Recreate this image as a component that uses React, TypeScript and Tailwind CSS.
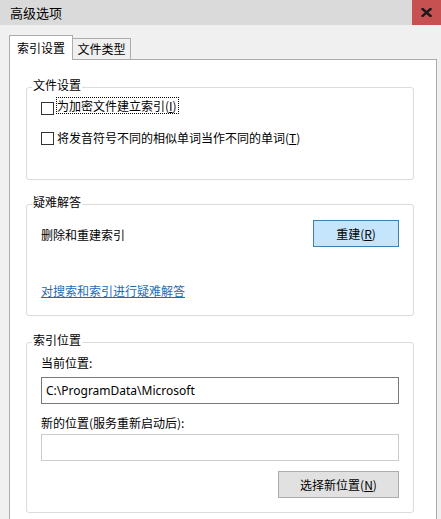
import React from "react";

const cjk = { fontFamily: '"Noto Sans CJK SC", "Noto Sans", sans-serif' };
const latin = { fontFamily: '"Noto Sans", "Noto Sans CJK SC", sans-serif' };

function Box() {
  return <span className="block w-[13px] h-[13px] shrink-0 border border-[#333333] bg-white" />;
}

export default function App() {
  return (
    <div
      className="w-[441px] h-[519px] overflow-hidden bg-[#f0f0f0] text-[12px] text-black flex flex-col"
      style={cjk}
    >
      {/* title bar */}
      <div className="h-[25px] shrink-0 bg-[#dadada] flex items-stretch">
        <div className="flex-1 pl-[10px] flex items-center text-[13px] leading-none">高级选项</div>
        <div className="w-[29px] bg-[#c75050] flex items-center justify-center">
          <svg width="11" height="9" viewBox="0 0 11 9">
            <path d="M1.5 1 L9.5 8 M9.5 1 L1.5 8" stroke="#1a1a1a" strokeWidth="2.4" strokeLinecap="square" />
          </svg>
        </div>
      </div>

      {/* body */}
      <div className="flex-1 pl-[9px] pr-[4px] pt-[10px] flex flex-col">
        {/* tabs */}
        <div className="flex items-end h-[24px] shrink-0">
          <div className="relative z-10 w-[64px] h-[25px] -mb-[1px] bg-white border border-b-0 border-[#acacac] flex items-start justify-center pt-[4px] leading-[16px]">
            索引设置
          </div>
          <div className="w-[59px] h-[21px] -ml-[1px] bg-[#f0f0f0] border border-b-0 border-[#acacac] flex items-start justify-center pt-[2px] leading-[16px]">
            文件类型
          </div>
        </div>

        {/* panel */}
        <div className="h-[470px] shrink-0 bg-white border border-[#acacac] pl-[16px] pt-[19px]">
          {/* group 1 */}
          <fieldset className="w-[388px] border border-[#dcdcdc] rounded-[3px] pb-[33px]">
            <legend className="ml-[5px] px-[1px] leading-[16px] relative -top-[2px]">文件设置</legend>
            <div className="px-[14px]">
              <div className="flex items-start mt-[2px]">
                <span className="mt-[5px]"><Box /></span>
                <span className="ml-[2px] border border-dotted border-black leading-[15px] pr-[1px]">
                  为加密文件建立索引(<span className="underline">I</span>)
                </span>
              </div>
              <div className="flex items-start mt-[15px]">
                <span className="mt-[2px]"><Box /></span>
                <span className="ml-[3px] leading-[16px]">
                  将发音符号不同的相似单词当作不同的单词(<span className="underline">T</span>)
                </span>
              </div>
            </div>
          </fieldset>

          {/* group 2 */}
          <fieldset className="w-[388px] mt-[16px] border border-[#dcdcdc] rounded-[3px] pb-[16px]">
            <legend className="ml-[5px] px-[1px] leading-[16px] relative -top-[2px]">疑难解答</legend>
            <div className="px-[14px]">
              <div className="flex items-center justify-between mt-[8px]">
                <span className="leading-[16px] pt-[2px]">删除和重建索引</span>
                <button className="w-[86px] h-[27px] bg-[#c4e5fb] border border-[#3c7fb1] leading-[16px]">
                  重建(<span className="underline">R</span>)
                </button>
              </div>
              <div className="mt-[36px] leading-[16px]">
                <span className="text-[#1c6bb4] underline underline-offset-1">对搜索和索引进行疑难解答</span>
              </div>
            </div>
          </fieldset>

          {/* group 3 */}
          <fieldset className="w-[388px] mt-[18px] border border-[#dcdcdc] rounded-[3px] pb-[14px]">
            <legend className="ml-[5px] px-[1px] leading-[16px] relative -top-[2px]">索引位置</legend>
            <div className="px-[14px] flex flex-col">
              <div className="mt-[5px] leading-[16px]">当前位置:</div>
              <div
                className="mt-[6px] h-[27px] border border-[#7a7a7a] bg-white pl-[4px] flex items-center text-[12px]"
                style={latin}
              >
                C:\ProgramData\Microsoft
              </div>
              <div className="mt-[11px] leading-[16px]">新的位置(服务重新启动后):</div>
              <div className="mt-[3px] h-[27px] border border-[#cccccc] bg-white" />
              <div className="mt-[10px] flex justify-end">
                <button className="w-[121px] h-[27px] bg-[#e1e1e1] border border-[#adadad] leading-[16px]">
                  选择新位置(<span className="underline">N</span>)
                </button>
              </div>
            </div>
          </fieldset>
        </div>
      </div>
    </div>
  );
}
